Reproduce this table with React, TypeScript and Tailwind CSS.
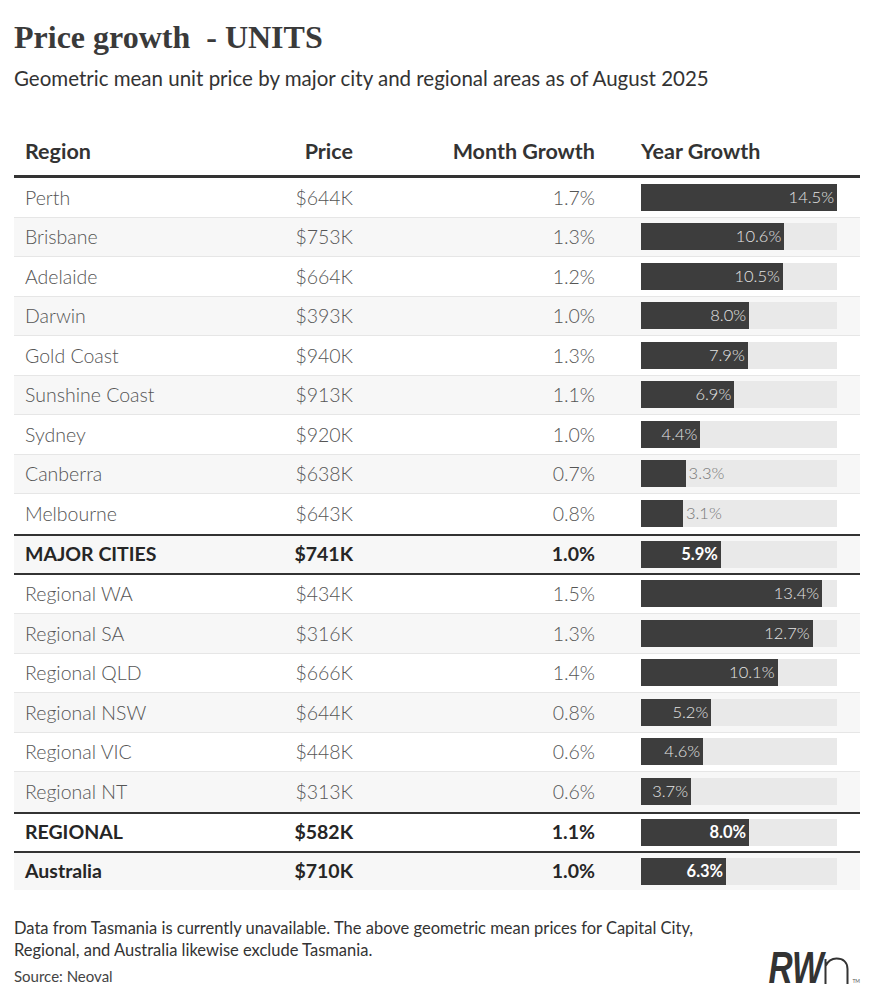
import React from "react";

type Row = { region: string; price: string; month: string; year: number; total?: boolean };

const cities: Row[] = [
  { region: "Perth", price: "$644K", month: "1.7%", year: 14.5 },
  { region: "Brisbane", price: "$753K", month: "1.3%", year: 10.6 },
  { region: "Adelaide", price: "$664K", month: "1.2%", year: 10.5 },
  { region: "Darwin", price: "$393K", month: "1.0%", year: 8.0 },
  { region: "Gold Coast", price: "$940K", month: "1.3%", year: 7.9 },
  { region: "Sunshine Coast", price: "$913K", month: "1.1%", year: 6.9 },
  { region: "Sydney", price: "$920K", month: "1.0%", year: 4.4 },
  { region: "Canberra", price: "$638K", month: "0.7%", year: 3.3 },
  { region: "Melbourne", price: "$643K", month: "0.8%", year: 3.1 },
];

const regional: Row[] = [
  { region: "Regional WA", price: "$434K", month: "1.5%", year: 13.4 },
  { region: "Regional SA", price: "$316K", month: "1.3%", year: 12.7 },
  { region: "Regional QLD", price: "$666K", month: "1.4%", year: 10.1 },
  { region: "Regional NSW", price: "$644K", month: "0.8%", year: 5.2 },
  { region: "Regional VIC", price: "$448K", month: "0.6%", year: 4.6 },
  { region: "Regional NT", price: "$313K", month: "0.6%", year: 3.7 },
];

const MAX = 14.5;
const TRACK = 196;

const Bar = ({ value, total }: { value: number; total?: boolean }) => {
  const w = (value / MAX) * TRACK;
  const inside = value >= 3.5;
  const label = value.toFixed(1) + "%";
  return (
    <div className="flex h-[27px] w-[196px] bg-[#e9e9e9]">
      <div
        className="flex h-full items-center justify-end bg-[#3d3d3d] pr-[3px]"
        style={{ width: w }}
      >
        {inside && (
          <span className={total ? "text-[16.5px] font-bold text-white" : "text-[16.5px] font-light text-[#e4e4e4]"}>
            {label}
          </span>
        )}
      </div>
      {!inside && (
        <span className="flex items-center pl-[3px] text-[16.5px] font-light text-[#777]">{label}</span>
      )}
    </div>
  );
};

const TableRow = ({ row, shade }: { row: Row; shade: boolean }) => (
  <div
    className={
      "flex items-center pl-[11px] " +
      (row.total ? "h-[37px] text-[19.5px] font-bold text-[#262626] " : "h-[39.5px] text-[19.5px] font-light text-[#555] ") +
      (shade ? "bg-[#f7f7f7]" : "bg-white")
    }
  >
    <div className="w-[228px]">{row.region}</div>
    <div className="w-[100px] text-right">{row.price}</div>
    <div className="w-[242px] text-right">{row.month}</div>
    <div className="ml-[46px]">
      <Bar value={row.year} total={row.total} />
    </div>
  </div>
);

const Logo = () => (
  <div className="flex items-end pb-[2px]">
    <span
      className="origin-right scale-x-[0.76] text-[44px] leading-[32px] font-black italic text-[#333]"
      style={{ fontFamily: "'Liberation Sans', Arial, sans-serif" }}
    >
      RW
    </span>
    <svg width="26" height="27" viewBox="0 0 26 27" className="ml-[1px]">
      <path d="M1.5 27 V2 M1.5 9 C4 4 8 1.5 12.5 1.5 C19 1.5 23.5 5 23.5 12 V27" fill="none" stroke="#333" strokeWidth="2" />
    </svg>
    <span className="ml-[2px] text-[5px] leading-none text-[#555]">TM</span>
  </div>
);

export default function App() {
  return (
    <div
      className="w-[874px] h-[1000px] bg-white px-[14px] pt-[17px] text-[#333]"
      style={{ fontFamily: "Lato, 'Open Sans', sans-serif" }}
    >
      <h1
        className="text-[32px] leading-[40px] font-bold text-[#3a3a3a]"
        style={{ fontFamily: "'Liberation Serif', 'DejaVu Serif', serif" }}
      >
        Price growth&nbsp; - UNITS
      </h1>
      <p className="mt-[8px] text-[20.5px] leading-[26px] text-[#333]">
        Geometric mean unit price by major city and regional areas as of August 2025
      </p>

      <div className="mt-[39px] w-[846px]">
        <div className="flex h-[48px] items-center border-b-[3px] border-[#333] pb-[3px] pl-[11px] text-[21.5px] font-bold text-[#333]">
          <div className="w-[228px]">Region</div>
          <div className="w-[100px] text-right">Price</div>
          <div className="w-[242px] text-right">Month Growth</div>
          <div className="ml-[46px]">Year Growth</div>
        </div>
        <div className="divide-y divide-[#e6e6e6]">
          {cities.map((r, i) => (
            <TableRow key={r.region} row={r} shade={i % 2 === 1} />
          ))}
        </div>
        <div className="border-y-2 border-[#333]">
          <TableRow row={{ region: "MAJOR CITIES", price: "$741K", month: "1.0%", year: 5.9, total: true }} shade />
        </div>
        <div className="divide-y divide-[#e6e6e6]">
          {regional.map((r, i) => (
            <TableRow key={r.region} row={r} shade={i % 2 === 1} />
          ))}
        </div>
        <div className="border-y-2 border-[#333]">
          <TableRow row={{ region: "REGIONAL", price: "$582K", month: "1.1%", year: 8.0, total: true }} shade={false} />
        </div>
        <TableRow row={{ region: "Australia", price: "$710K", month: "1.0%", year: 6.3, total: true }} shade />
      </div>

      <div className="mt-[27px] flex items-end justify-between">
        <div>
          <p className="text-[16.5px] leading-[22px] text-[#333]">
            Data from Tasmania is currently unavailable. The above geometric mean prices for Capital City,
            <br />
            Regional, and Australia likewise exclude Tasmania.
          </p>
          <p className="mt-[5px] text-[15px] leading-[20px] text-[#444]">Source: Neoval</p>
        </div>
        <Logo />
      </div>
    </div>
  );
}
